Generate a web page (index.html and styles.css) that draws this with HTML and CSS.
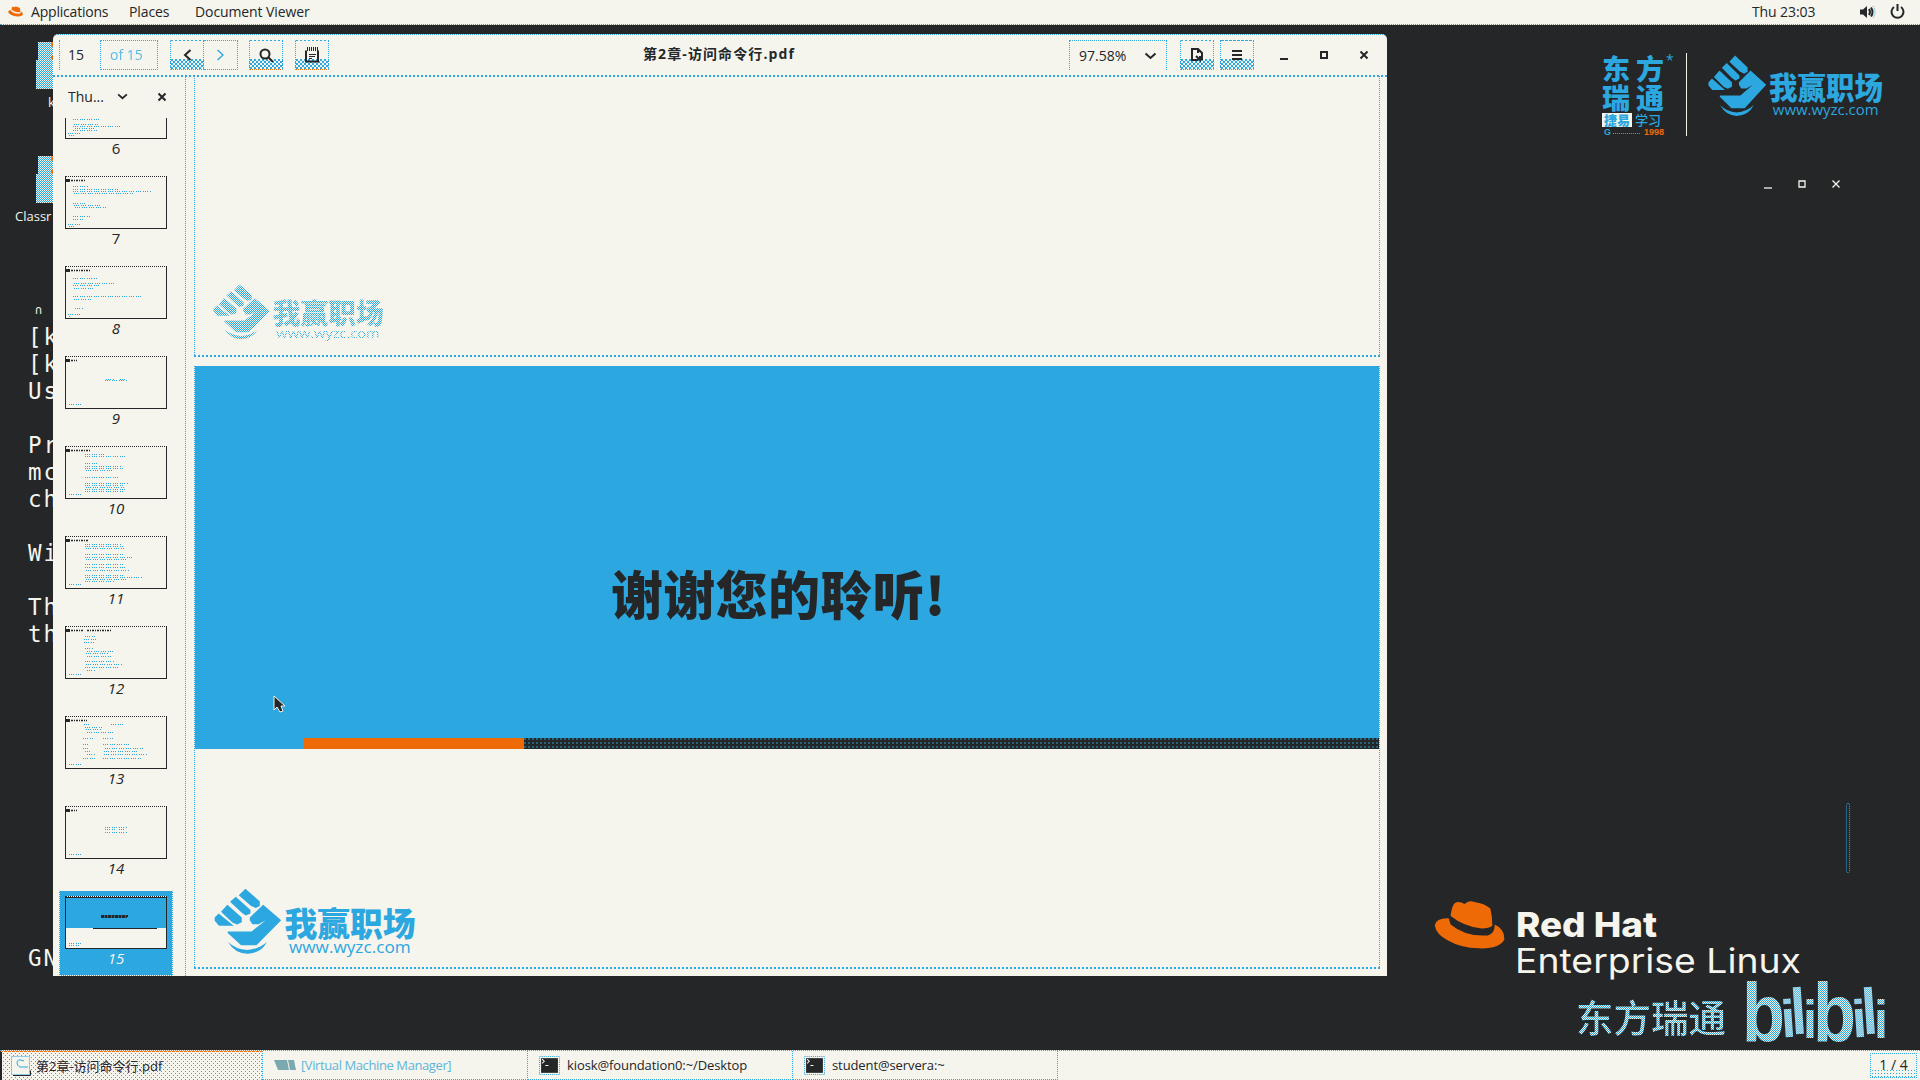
FILE: index.html
```html
<!DOCTYPE html>
<html lang="zh-CN">
<head>
<meta charset="utf-8">
<title>第2章-访问命令行.pdf</title>
<link rel="stylesheet" href="styles.css">
</head>
<body>
<svg class="defs" width="0" height="0" aria-hidden="true">
  <defs>
    <pattern id="check" width="2" height="2" patternUnits="userSpaceOnUse"><rect width="2" height="2" fill="#f5f4ed"/><path d="M0 0h1v1H0zM1 1h1v1H1z" fill="#2ca7df"/></pattern>
    <g id="hat">
      <path d="M150 406C152 388 156 372 164 366Q176 360 192 370Q204 358 222 364Q252 368 270 384Q276 408 276 436Q266 444 244 444Q190 438 150 406Z"/>
      <path d="M144 413Q106 412 102 434Q106 462 142 480Q180 502 236 504Q296 506 312 478Q314 446 283 432Q284 460 262 465Q196 470 150 432Z"/>
    </g>
    <symbol id="wyzc" viewBox="640 682 610 206" preserveAspectRatio="none">
      <path d="M737 684L780 722L780 736L768 742L754 736L717 704ZM708 708L752 748V758L738 764L726 756L691 723ZM683 732L726 770V784L712 791L698 785L664 753ZM657 758L702 795H658L645 780V770ZM790 732L844 778L770 853H724L684 816V812H755L798 778L776 790L758 790L750 778V770Z"/>
      <path d="M685 843Q708 865 742 867Q777 865 801 843Q784 877 742 878Q705 877 685 843Z"/>
      <text class="wyzc-name" x="854" y="824" font-size="100" textLength="392" lengthAdjust="spacingAndGlyphs">我赢职场</text>
      <text class="wyzc-url" x="867" y="875" font-size="46" textLength="364" lengthAdjust="spacingAndGlyphs">www.wyzc.com</text>
    </symbol>
    <symbol id="terminal" viewBox="0 0 20 18"><rect x=".5" y=".5" width="19" height="17" class="term-edge"/><rect x="2" y="2" width="16" height="14" class="term-bg"/><path d="M3 3l2 2-2 2M6 9h3" class="term-mark"/></symbol>
    <symbol id="chevron" viewBox="0 0 12 8"><path d="M1 1.5l5 4.5 5-4.5"/></symbol>
    <symbol id="cross" viewBox="0 0 10 10"><path d="M1.5 1.5l7 7M8.500 1.500l-7 7"/></symbol>
    <symbol id="square" viewBox="0 0 10 10"><path d="M2 2h6v6H2z"/></symbol>
    <symbol id="dash" viewBox="0 0 10 10"><path d="M1 9h8"/></symbol>
  </defs>
</svg>

<header class="topbar">
  <svg class="topbar-hat" viewBox="100 358 214 148"><use href="#hat"/></svg>
  <span class="menu-apps">Applications</span>
  <span class="menu-places">Places</span>
  <span>Document Viewer</span>
  <span class="clock">Thu 23:03</span>
  <svg class="sound" width="16" height="14" viewBox="0 0 16 14"><path class="ink-fill" d="M0 4.500h3L7 1v12L3 9.500H0z"/><path class="ink-line" d="M9 4q2 3 0 6M11 2.500q3 4.500 0 9"/><path class="faint-line" d="M13 1q4 6 0 12"/></svg>
  <svg class="power" width="15" height="15" viewBox="0 0 15 15"><path class="ink-line" d="M4 3a6 6 0 1 0 7 0M7.500 0v7"/></svg>
</header>

<main class="desktop">
  <div class="folder folder-one"><i></i><i></i><span>k</span></div>
  <div class="folder folder-two"><i></i><i></i><span>Classr</span></div>

  <pre class="console"><span class="console-ghost">∩</span>
[k
[k
Us

Pr
mc
ch

Wi

Th
th











GN</pre>

  <section class="viewer">
    <div class="headerbar">
      <div class="page-entry">15</div>
      <div class="page-total"><span>of 15</span></div>
      <div class="nav">
        <div class="btn shaded"><svg class="line" width="9" height="12" viewBox="0 0 9 12"><path d="M7.500 1L2 6l5.500 5"/></svg></div>
        <div class="btn"><svg class="line pale" width="9" height="12" viewBox="0 0 9 12"><path d="M1.500 1L7 6l-5.500 5"/></svg></div>
      </div>
      <div class="btn shaded find"><svg class="line" width="15" height="14" viewBox="0 0 15 14"><circle cx="6" cy="6" r="4.500"/><path d="M9 9l5 5"/></svg></div>
      <div class="btn shaded note"><svg width="14" height="16" viewBox="0 0 14 16"><path class="ink-line" d="M1 3.500v11h12v-11"/><path class="note-rings" d="M2 2h11"/><path class="note-lines" d="M4 7.500h7M4 9.500h6M4 11.500h3"/></svg></div>
      <h1>第2章-访问命令行.pdf</h1>
      <div class="zoom"><span>97.58%</span><svg class="line" width="13" height="8"><use href="#chevron"/></svg></div>
      <div class="btn shaded save"><svg class="line" width="14" height="14" viewBox="0 0 14 14"><path d="M8 12H2V1h6l4 4v7M8 1v4M6 8l4 4V8"/></svg></div>
      <div class="btn shaded menu"><svg class="line" width="10" height="10" viewBox="0 0 10 10"><path d="M0 1h10M0 5h10M0 9h10"/></svg></div>
      <div class="controls"><svg class="line" width="10" height="10"><use href="#dash"/></svg><svg class="line" width="10" height="10"><use href="#square"/></svg><svg class="line" width="10" height="10"><use href="#cross"/></svg></div>
    </div>

    <div class="content">
      <aside class="sidebar">
        <div class="side-head"><span>Thu...</span><svg class="line" width="11" height="7"><use href="#chevron"/></svg><svg class="line side-close" width="10" height="10"><use href="#cross"/></svg></div>
        <div class="thumbs">
          <figure class="first"><svg viewBox="1 33 100 20"><path d="M8 34.500h26M9 39.500h25M8 41.500h48M10 43.500h20M8 45.500h24M3 48.500h12M4 50.500h5"/></svg><figcaption>6</figcaption></figure>
          <figure><svg viewBox="1 1 100 51"><path class="th-mark" d="M1 3h4v3H1z"/><path class="th-head" d="M6 4.500h14"/><path d="M8 10.500h15M8 13.500h46M8 15.500h78M9 17.500h60M8 27.500h14M9 29.500h26M10 31.500h32M8 40.500h17M8 43.500h10M3 48.500h12M4 50.500h5"/></svg><figcaption>7</figcaption></figure>
          <figure><svg viewBox="1 1 100 51"><path class="th-mark" d="M1 3h4v3H1z"/><path class="th-head" d="M6 4.500h20"/><path d="M8 12.500h25M9 17.500h41M8 19.500h27M9 22.500h20M8 30.500h68M9 33.500h18M10 42.500h9M3 48.500h12M4 50.500h2"/></svg><figcaption>8</figcaption></figure>
          <figure><svg viewBox="1 1 100 51"><path class="th-mark" d="M1 3h4v3H1z"/><path class="th-head" d="M6 4.500h6"/><path d="M40 24.500h22M41 23.500h9M55 23.500h7M4 48.500h12"/></svg><figcaption>9</figcaption></figure>
          <figure><svg viewBox="1 1 100 51"><path class="th-mark" d="M1 3h4v3H1z"/><path class="th-head" d="M6 4.500h20"/><path d="M20 8.500h20M20 10.500h40M20 17.500h14M20 20.500h37M20 22.500h38M21 24.500h26M20 31.500h34M20 37.500h44M20 39.500h39M21 41.500h38M20 43.500h40M20 45.500h38M4 48.500h12"/></svg><figcaption>10</figcaption></figure>
          <figure><svg viewBox="1 1 100 51"><path class="th-mark" d="M1 3h4v3H1z"/><path class="th-head" d="M6 4.500h18"/><path d="M20 8.500h36M20 10.500h39M21 12.500h38M20 18.500h38M20 21.500h47M21 23.500h40M20 28.500h38M20 31.500h42M21 34.500h44M20 39.500h38M20 41.500h57M21 43.500h40M20 45.500h30M4 48.500h12"/></svg><figcaption>11</figcaption></figure>
          <figure><svg viewBox="1 1 100 51"><path class="th-mark" d="M1 3h4v3H1z"/><path class="th-head" d="M6 4.500h12M22 4.500h25"/><path d="M20 10.500h10M19 13.500h12M19 16.500h10M20 22.500h8M22 25.500h26M21 27.500h23M22 30.500h25M20 35.500h29M21 38.500h36M20 41.500h34M22 44.500h9M4 48.500h12"/></svg><figcaption>12</figcaption></figure>
          <figure><svg viewBox="1 1 100 51"><path class="th-mark" d="M1 3h4v3H1z"/><path class="th-head" d="M6 4.500h16"/><path d="M19 8.500h6M46 8.500h14M20 11.500h17M21 13.500h15M22 16.500h26M18 22.500h10M38 22.500h11M18 28.500h5M38 28.500h27M18 32.500h6M40 32.500h38M20 35.500h5M39 35.500h35M22 38.500h8M39 38.500h43M18 42.500h14M38 42.500h38M4 48.500h12"/></svg><figcaption>13</figcaption></figure>
          <figure><svg viewBox="1 1 100 51"><path class="th-mark" d="M1 3h4v3H1z"/><path class="th-head" d="M6 4.500h6"/><path d="M40 21.500h22M40 23.500h11M54 23.500h7M40 26.500h22M4 48.500h12"/></svg><figcaption>14</figcaption></figure>
          <figure class="selected"><svg viewBox="1 1 100 51"><rect width="102" height="32" class="th-blue"/><path class="th-rule" d="M0 1.500h102M28 32.500h64"/><path class="th-title" d="M36 20h27M36 21h26"/><path d="M4 47.500h12M4 49.500h10"/></svg><figcaption>15</figcaption></figure>
        </div>
      </aside>

      <div class="pages">
        <article class="page page-prev"><svg class="logo"><use href="#wyzc"/></svg></article>
        <article class="page page-last">
          <div class="slide"><h2>谢谢您的聆听!</h2></div>
          <div class="stripe"><i></i><b></b></div>
          <div class="page-foot"><svg class="logo"><use href="#wyzc"/></svg></div>
        </article>
        <svg class="pointer" width="14" height="19" viewBox="0 0 14 19"><path d="M1 1v14l3-3 3 5 3-1-2-5h4z"/></svg>
      </div>
    </div>
  </section>

  <div class="brand">
    <div class="brand-east">
      <div class="brand-big">东方瑞通</div>
      <div class="brand-learn"><b>捷易</b><span>学习</span></div>
      <div class="brand-year"><i>G</i><s></s><em>1998</em></div>
    </div>
    <sup>*</sup>
    <svg class="logo"><use href="#wyzc"/></svg>
  </div>

  <div class="back-controls"><svg class="line" width="10" height="10"><use href="#dash"/></svg><svg class="line" width="10" height="10"><use href="#square"/></svg><svg class="line" width="10" height="10"><use href="#cross"/></svg></div>
  <div class="scroll-mark"></div>

  <div class="rhel">
    <svg viewBox="100 358 214 148"><use href="#hat"/></svg>
    <svg class="rhel-text" width="290" height="76" viewBox="0 0 290 76">
      <text x="-1" y="29" font-size="34" font-weight="800" textLength="141" lengthAdjust="spacingAndGlyphs">Red Hat</text>
      <text x="-2" y="65" font-size="33.500" textLength="286" lengthAdjust="spacingAndGlyphs">Enterprise Linux</text>
    </svg>
  </div>

  <div class="watermark">
    <span>东方瑞通</span>
    <svg width="144" height="66" viewBox="0 0 144 66">
      <text class="wm-b" x="-2" y="62" textLength="43" lengthAdjust="spacingAndGlyphs">b</text>
      <g transform="rotate(-4 46 58)"><text class="wm-i" x="38" y="57" textLength="15" lengthAdjust="spacingAndGlyphs">i</text></g>
      <g transform="rotate(-4 56 56)"><text class="wm-l" x="48" y="54" textLength="16" lengthAdjust="spacingAndGlyphs">l</text></g>
      <text class="wm-i" x="59" y="58" textLength="14" lengthAdjust="spacingAndGlyphs">i</text>
      <text class="wm-b" x="69" y="62" textLength="43" lengthAdjust="spacingAndGlyphs">b</text>
      <g transform="rotate(-4 117 58)"><text class="wm-i" x="109" y="57" textLength="15" lengthAdjust="spacingAndGlyphs">i</text></g>
      <g transform="rotate(-4 127 56)"><text class="wm-l" x="119" y="54" textLength="16" lengthAdjust="spacingAndGlyphs">l</text></g>
      <text class="wm-i" x="130" y="58" textLength="14" lengthAdjust="spacingAndGlyphs">i</text>
    </svg>
  </div>
</main>

<footer class="taskbar">
  <div class="task active"><svg width="20" height="20" viewBox="0 0 20 20"><rect class="doc-edge" x=".5" y=".5" width="18" height="18"/><path class="doc-shadow" d="M2 19.500h17.500v-5"/><path class="doc-line" d="M13 5q-7-3-7 2 1 5 6 4h5"/></svg><span>第2章-访问命令行.pdf</span></div>
  <div class="task vmm"><svg width="22" height="12" viewBox="0 0 22 12"><path d="M0 1h7l3 10H4zM7 1h6l2 10h-5zM14 1h6l2 10h-6z"/></svg><span>[Virtual Machine Manager]</span></div>
  <div class="task"><svg width="21" height="19"><use href="#terminal"/></svg><span>kiosk@foundation0:~/Desktop</span></div>
  <div class="task"><svg width="21" height="19"><use href="#terminal"/></svg><span>student@servera:~</span></div>
  <div class="pager">1 / 4</div>
</footer>
</body>
</html>
```
FILE: styles.css
```css
:root {
  --ink: #242628;
  --paper: #f5f4ed;
  --blue: #2ca7df;
  --orange: #ee6a07;
  --check: repeating-conic-gradient(#000 0 25%, transparent 0 50%) 0 0 / 2px 2px;
  --speck: linear-gradient(var(--blue), var(--blue));
}
* { box-sizing: border-box; }
body {
  margin: 0;
  width: 1920px;
  height: 1080px;
  overflow: hidden;
  display: grid;
  grid-template-rows: 25px 1025px 30px;
  background: var(--ink);
  color: var(--ink);
  font: 14px/20px "Open Sans", "Noto Sans CJK SC", sans-serif;
}
.defs { position: absolute; }
svg { display: block; flex: none; }
h1, h2, figure, pre { margin: 0; }
.line { fill: none; stroke: var(--ink); stroke-width: 2; }
.pale { stroke: var(--blue); stroke-width: 1.3; }
.ink-fill { fill: var(--ink); }
.ink-line { fill: none; stroke: var(--ink); stroke-width: 2; }
.faint-line { fill: none; stroke: var(--blue); stroke-dasharray: 1 1; }

/* panel */
.topbar {
  display: flex;
  align-items: center;
  padding: 0 15px 1px 8px;
  background: var(--paper);
  border-bottom: 1px dotted var(--blue);
  letter-spacing: -.1px;
}
.topbar-hat { width: 15px; height: 11px; fill: var(--orange); margin-right: 8px; }
.menu-apps { width: 98px; letter-spacing: -.2px; }
.menu-places { width: 66px; }
.clock { margin-left: auto; width: 108px; }
.sound { margin-right: 14px; }

.desktop { position: relative; overflow: hidden; }

/* desktop icons and console behind the viewer */
.folder { position: absolute; left: 15px; color: var(--paper); width: 60px; }
.folder i {
  display: block;
  width: 18px;
  height: 18px;
  margin-left: 23px;
  background: repeating-conic-gradient(var(--blue) 0 25%, var(--paper) 0 50%) 0 0 / 2px 2px;
  border-right: 5px dotted var(--orange);
}
.folder i + i { width: 19px; height: 29px; margin-left: 21px; border-right: 0; }
.folder span { display: block; font-size: 13px; margin-top: 3px; }
.folder-one { top: 17px; }
.folder-one span { padding-left: 33px; }
.folder-two { top: 131px; }
.console {
  position: absolute;
  left: 28px;
  top: 268px;
  color: var(--paper);
  font: 22.500px/27px "DejaVu Sans Mono", monospace;
  letter-spacing: 2px;
}
.console-ghost { font-size: 12px; padding-left: 7px; }

/* viewer window */
.viewer {
  position: absolute;
  left: 53px;
  top: 9px;
  width: 1334px;
  height: 942px;
  display: flex;
  flex-direction: column;
  background: var(--paper);
  border-radius: 5px 5px 0 0;
  border-top: 1px dotted var(--blue);
}
.headerbar {
  position: relative;
  height: 42px;
  display: flex;
  align-items: flex-start;
  padding: 5px 18px 0 6px;
  border-bottom: 2px dotted var(--blue);
}
.btn, .page-entry, .page-total, .zoom {
  height: 30px;
  display: flex;
  align-items: center;
  border: 1px dotted var(--blue);
}
.btn { width: 34px; justify-content: center; padding-bottom: 1px; }
.shaded {
  border-top-color: transparent;
  background: linear-gradient(var(--paper) 18px, transparent 18px), var(--speck) 0 0 / 1px 1px no-repeat;
  background: linear-gradient(var(--paper) 18px, transparent 18px), repeating-conic-gradient(var(--blue) 0 25%, var(--paper) 0 50%) 0 0 / 4px 4px;
  border-bottom-color: var(--orange);
}
.page-entry { width: 41px; padding-left: 8px; border-width: 0 0 0 1px; }
.page-total { width: 58px; padding-left: 9px; color: var(--blue); }
.page-total span { opacity: .75; }
.nav { display: flex; margin-left: 12px; }
.nav .btn + .btn { border-left: 0; }
.find { margin-left: 11px; }
.note { margin-left: 12px; }
.note-rings { stroke: var(--ink); stroke-width: 4; stroke-dasharray: 1 1; }
.note-lines { stroke: var(--ink); }
.headerbar h1 {
  position: absolute;
  left: 590px;
  top: 9px;
  font-size: 14px;
  line-height: 20px;
  font-weight: 700;
  letter-spacing: 1.1px;
  white-space: nowrap;
}
.zoom { width: 98px; margin-left: auto; padding: 0 9px; justify-content: space-between; border-bottom: 0; }
.save { margin-left: 13px; }
.menu { margin-left: 6px; border-top-color: var(--blue); }
.controls { display: flex; gap: 30px; margin: 10px 0 0 25px; }

.content { flex: 1; display: flex; min-height: 0; }
.sidebar { width: 133px; border-right: 1px dotted var(--blue); display: flex; flex-direction: column; }
.side-head { height: 41px; display: flex; align-items: center; padding: 0 0 2px 15px; }
.side-head span { width: 49px; }
.side-close { margin-left: 29px; }
.thumbs { flex: 1; overflow: hidden; }
figure { height: 90px; margin: 0 12px 0 6px; padding: 5px 6px 0; }
figure svg {
  width: 102px;
  height: 53px;
  background: var(--paper);
  border: 1px solid var(--ink);
  border-top: 1px dotted var(--ink);
}
figure path { fill: none; stroke: var(--blue); stroke-width: 1; stroke-dasharray: 1 1 1 1 1 2; }
figure .th-mark { fill: var(--ink); stroke: none; }
figure .th-head { stroke: var(--ink); stroke-width: 1.500; stroke-dasharray: 2 1 1 1; }
.th-blue { fill: var(--blue); }
figure .th-rule { stroke: var(--ink); stroke-dasharray: none; }
figure .th-title { stroke: var(--ink); stroke-width: 2; stroke-dasharray: 3 .5; }
figcaption { height: 20px; margin-top: -1px; text-align: center; font: italic 15px/20px "Open Sans", sans-serif; }
figure.first { height: 53px; padding-top: 0; }
figure.first svg { height: 21px; border-top: 0; }
figure:nth-child(-n+2) figcaption { font-style: normal; }
.selected { background: var(--blue); border: 1px dotted var(--paper); border-top-color: var(--blue); height: 85px; }
.selected svg { margin-left: -1px; margin-top: -1px; }
.selected figcaption { color: var(--paper); }

.pages { position: relative; flex: 1; margin-top: -1px; padding-left: 8px; overflow: hidden; }
.page { width: 1186px; border: 1px dotted var(--blue); }
.page-prev { height: 281px; border-top: 0; border-bottom-width: 2px; padding: 208px 0 0 17px; }
.page-prev .logo { width: 173px; height: 58px; -webkit-mask: var(--check); mask: var(--check); }
.logo { fill: var(--blue); }
.wyzc-name { font-family: "Noto Sans CJK SC", sans-serif; font-weight: 900; }
.wyzc-url { font-family: "Open Sans", sans-serif; }
.page-last { height: 603px; margin-top: 9px; border-top: 0; border-bottom: 2px dotted var(--blue); display: flex; flex-direction: column; }
.slide { height: 372px; background: var(--blue); padding: 200px 0 0 416px; }
.slide h2 {
  font: 900 52px/54px "Noto Sans CJK SC", sans-serif;
  letter-spacing: .3px;
  white-space: nowrap;
}
.stripe { height: 11px; display: flex; background: var(--blue); }
.stripe i { width: 220px; margin-left: 109px; background: var(--orange); }
.stripe b {
  flex: 1;
  background: radial-gradient(circle at 1px 1px, var(--blue) .6px, transparent .8px) 0 0 / 4px 4px, var(--ink);
}
.page-foot { padding: 139px 0 0 18px; }
.page-foot .logo { width: 204px; height: 69px; }

/* wallpaper branding */
.brand { position: absolute; left: 1602px; top: 28px; display: flex; color: var(--blue); }
.brand-east { width: 85px; height: 83px; border-right: 1px solid var(--paper); padding-top: 1px; }
.brand-big {
  width: 72px;
  height: 59px;
  font: 900 28px/29px "Noto Sans CJK SC", sans-serif;
  letter-spacing: 6px;
  word-break: break-all;
}
.brand-learn { display: flex; width: 62px; height: 14px; font: 900 13px/14px "Noto Sans CJK SC", sans-serif; }
.brand-learn b { width: 30px; text-align: center; background: var(--paper); }
.brand-learn span { padding-left: 3px; font-weight: 500; }
.brand-year { display: flex; align-items: center; height: 10px; width: 62px; font: 700 9px/10px "Liberation Sans", sans-serif; padding-left: 2px; }
.brand-year i { font-style: normal; }
.brand-year s { width: 27px; height: 2px; margin: 4px 4px 0 2px; border-top: 1px dotted var(--blue); }
.brand-year em { color: var(--orange); font-style: normal; }
.brand sup { position: absolute; left: 64px; top: -3px; font-size: 14px; line-height: 20px; }
.brand .logo { width: 177px; height: 64px; margin: 2px 0 0 20px; }

.back-controls { position: absolute; left: 1763px; top: 154px; display: flex; gap: 24px; }
.back-controls .line { stroke: var(--paper); stroke-width: 1.300; }
.scroll-mark { position: absolute; left: 1846px; top: 778px; width: 4px; height: 70px; border: 1px dotted var(--blue); border-radius: 2px; }

.rhel { position: absolute; left: 1434px; top: 875px; display: flex; }
.rhel > svg:first-child { width: 71px; height: 49px; fill: var(--orange); }
.rhel .rhel-text { overflow: visible; margin: 8px 0 0 12px; fill: var(--paper); font-family: Inter, sans-serif; }
.watermark { position: absolute; left: 1576px; top: 955px; display: flex; }
.watermark span {
  width: 168px;
  padding-top: 14px;
  font: 500 37.500px/44px "Noto Sans CJK SC", sans-serif;
  white-space: nowrap;
  color: transparent;
  background: repeating-conic-gradient(var(--blue) 0 25%, var(--paper) 0 50%) 0 0 / 2px 2px;
  -webkit-background-clip: text;
  background-clip: text;
}
.watermark svg { overflow: visible; fill: url(#check); font-family: "Liberation Sans", sans-serif; font-weight: 700; }
.wm-b { font-size: 84px; }
.wm-i { font-size: 53px; }
.wm-l { font-size: 65px; }

/* window list */
.taskbar { display: flex; background: var(--paper); border-top: 1px dotted var(--blue); padding-right: 3px; }
.task {
  width: 265px;
  height: 29px;
  display: flex;
  align-items: center;
  gap: 7px;
  padding-left: 11px;
  border-right: 1px dotted var(--blue);
  border-bottom: 1px dotted var(--blue);
  font-size: 13px;
  letter-spacing: -.1px;
  white-space: nowrap;
}
.task.active {
  width: 263px;
  padding-left: 9px;
  border-top: 1px dotted var(--orange);
  border-bottom: 0;
  background: var(--speck) 0 0 / 0 0, conic-gradient(var(--blue) 25%, transparent 0) 0 0 / 2px 2px;
  background: radial-gradient(circle at 1.5px 1.5px, var(--blue) .6px, transparent .7px) 0 0 / 4px 4px, radial-gradient(circle at 1.5px 1.5px, var(--blue) .6px, transparent .7px) 2px 2px / 4px 4px;
  border-left: 2px solid var(--ink);
  letter-spacing: 0;
}
.task.active svg { margin-right: -2px; }
.doc-edge { fill: var(--paper); stroke: var(--blue); stroke-dasharray: 1 1; }
.doc-shadow { fill: none; stroke: var(--ink); }
.doc-line { fill: none; stroke: var(--blue); }
.vmm { color: #61b5d8; letter-spacing: -.4px; }
.vmm svg { fill: #7aa9b0; margin-right: -2px; }
.term-edge { fill: var(--paper); stroke: var(--blue); stroke-dasharray: 1 1; }
.term-bg { fill: var(--ink); }
.term-mark { fill: none; stroke: var(--paper); }
.pager {
  margin: 2px 0 0 auto;
  width: 47px;
  height: 25px;
  border: 1px dotted var(--blue);
  text-align: center;
  line-height: 22px;
  background: linear-gradient(var(--paper) 15px, transparent 15px), radial-gradient(circle at 1.5px 1.5px, var(--blue) .6px, transparent .7px) 0 0 / 3px 3px;
}

.pointer { position: absolute; left: 87px; top: 619px; }
.pointer path { fill: var(--ink); stroke: var(--paper); stroke-width: 1; }
```
